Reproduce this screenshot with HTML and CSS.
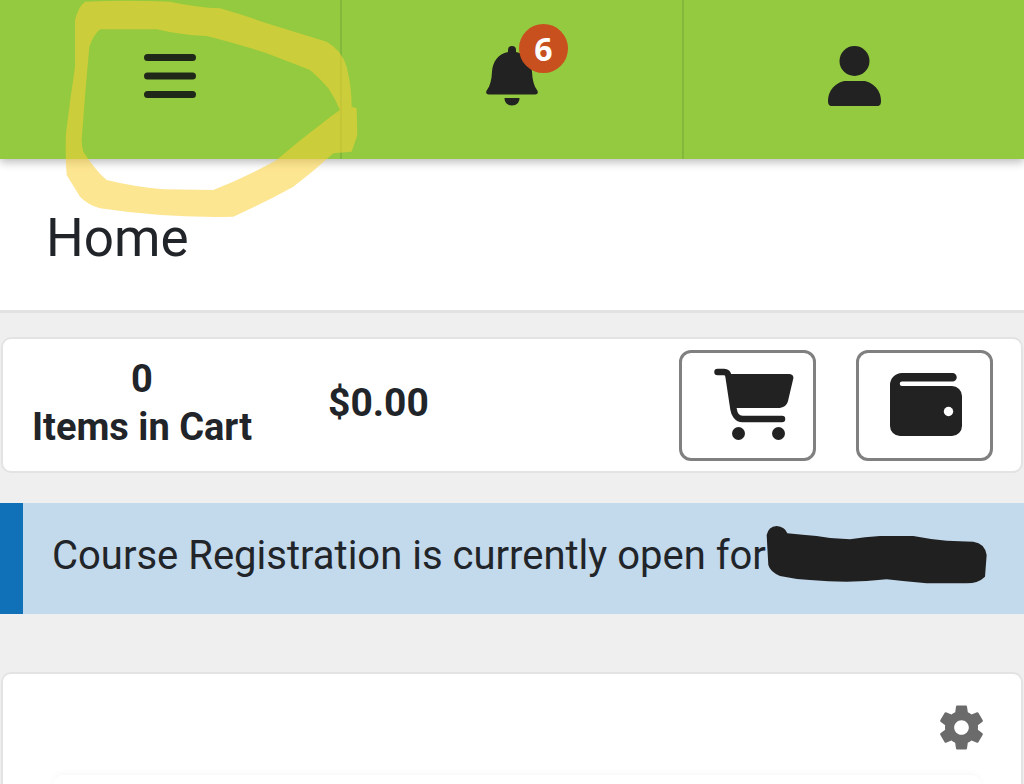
FILE: index.html
```html
<!DOCTYPE html>
<html lang="en">
<head>
    <meta charset="UTF-8">
    <meta name="viewport" content="width=device-width, initial-scale=1.0">
    <title>Home</title>
    <link rel="stylesheet" href="styles.css">
</head>
<body>
    <header class="topbar">
        <div class="topbar-item">
            <svg class="icon-menu" width="52" height="44" viewBox="0 0 52 44">
                <rect x="0" y="0" width="52" height="7" rx="3.5"/>
                <rect x="0" y="18.500" width="52" height="7" rx="3.5"/>
                <rect x="0" y="37" width="52" height="7" rx="3.5"/>
            </svg>
        </div>
        <div class="topbar-item">
            <div class="bell">
                <svg width="52" height="60" viewBox="0 0 52 60">
                    <path d="M26 0a4 4 0 0 1 4 4v2c10 2 15.500 10 16 20 .4 8 2 14 5 18 1.500 2 1 4.500-2 4.500H3c-3 0-3.500-2.500-2-4.500 3-4 4.600-10 5-18 .5-10 6-18 16-20V4a4 4 0 0 1 4-4z"/>
                    <path d="M18.500 52h15c0 4.500-3 7.500-7.500 7.500s-7.500-3-7.500-7.500z"/>
                </svg>
                <span class="badge">6</span>
            </div>
        </div>
        <div class="topbar-item">
            <svg width="53" height="60" viewBox="0 0 53 60">
                <circle cx="26.500" cy="15" r="15"/>
                <path d="M0 55c0-13 11-20 18-20h17c7 0 18 7 18 20 0 3-1 5-4 5H4c-3 0-4-2-4-5z"/>
            </svg>
        </div>
    </header>

    <section class="page-title">
        <h1>Home</h1>
    </section>

    <section class="card cart-card">
        <div class="cart-count">
            <div>0</div>
            <div>Items in Cart</div>
        </div>
        <div class="cart-total">$0.00</div>
        <div class="cart-buttons">
            <button class="icon-btn">
                <svg class="icon-cart" width="80" height="73" viewBox="0 0 80 73">
                    <path d="M3.500 4H10c2.500 0 4 1.500 4.500 4l5 33c.6 4.500 3.500 10 9 10H68" fill="none" stroke="#222" stroke-width="6.500" stroke-linecap="round"/>
                    <path d="M13 6h62c3 0 4.800 1.500 4.300 4.500L74 33c-1 4.500-5 7-10 7H19z"/>
                    <circle cx="24.500" cy="65.500" r="6.500"/>
                    <circle cx="64.500" cy="65.500" r="6.500"/>
                </svg>
            </button>
            <button class="icon-btn">
                <svg class="icon-wallet" width="72" height="63" viewBox="0 0 72 63">
                    <path d="M12 0h50.500a4.250 4.250 0 0 1 0 8.500H12a2.250 2.250 0 0 0 0 4.500h50a10 10 0 0 1 10 10v30a10 10 0 0 1-10 10H10a10 10 0 0 1-10-10V12A12 12 0 0 1 12 0z"/>
                    <circle cx="58.500" cy="38.500" r="4.700" fill="#fff"/>
                </svg>
            </button>
        </div>
    </section>

    <section class="notice">Course Registration is currently open for</section>

    <section class="card settings-card">
        <svg class="icon-gear" width="55" height="55" viewBox="0 0 24 24">
            <path d="M19.140 12.940c.04-.3.06-.61.06-.94 0-.32-.02-.64-.07-.94l2.030-1.580c.18-.14.23-.41.12-.61l-1.920-3.320c-.12-.22-.37-.29-.59-.22l-2.390.96c-.5-.38-1.030-.7-1.620-.94l-.36-2.540c-.04-.24-.24-.41-.48-.41h-3.840c-.24 0-.43.17-.47.41l-.36 2.540c-.59.24-1.130.57-1.620.94l-2.390-.96c-.22-.08-.47 0-.59.22L2.740 8.870c-.12.21-.08.47.12.61l2.030 1.580c-.05.3-.09.63-.09.94s.02.64.07.94l-2.030 1.580c-.18.14-.23.41-.12.61l1.920 3.320c.12.22.37.29.59.22l2.390-.96c.5.38 1.030.7 1.620.94l.36 2.540c.05.24.24.41.48.41h3.840c.24 0 .44-.17.47-.41l.36-2.540c.59-.24 1.130-.56 1.620-.94l2.390.96c.22.08.47 0 .59-.22l1.920-3.320c.12-.22.07-.47-.12-.61l-2.010-1.580zM12 15.200c-1.760 0-3.200-1.440-3.200-3.200s1.440-3.200 3.200-3.200 3.200 1.440 3.200 3.200-1.440 3.200-3.200 3.200z"/>
        </svg>
        <div class="settings-body"></div>
    </section>

    <!-- marks drawn on top of the screenshot -->
    <svg class="scribble" width="380" height="230" viewBox="0 0 1140 690">
        <path fill-rule="evenodd" d="M255 5Q380 0 510 5Q590 22 660 25Q730 45 800 70L980 125Q1025 150 1040 200Q1055 260 1055 320L1070 325L1072 405L1055 455L1000 460Q940 515 880 560Q790 610 700 650Q500 655 300 625Q265 615 240 590L200 525Q195 460 198 400Q210 300 225 200L225 60Q235 20 255 5ZM300 88Q280 105 268 140Q255 280 245 420Q245 440 250 455Q285 510 320 540Q400 560 490 568L640 570Q740 530 830 480Q900 420 960 375Q990 350 1020 330Q1005 295 985 265Q960 235 930 210Q865 185 800 160Q710 130 620 108Q540 105 470 88Z"/>
    </svg>
    <svg class="redaction" width="324" height="284" viewBox="0 0 972 852">
        <path d="M200 105Q205 80 230 78Q255 80 262 100Q310 105 350 108Q400 118 450 118Q495 110 540 108H640Q690 118 740 122L820 125Q855 130 860 165L855 230Q835 250 800 250H680Q620 245 560 238Q500 245 440 245Q385 245 330 240Q285 238 240 228Q210 215 205 195Z"/>
    </svg>
</body>
</html>
```

FILE: styles.css
```css
html, body {
    margin: 0;
    padding: 0;
    height: 784px;
    overflow: hidden;
}

body {
    position: relative;
    background-color: #efefef;
    font-family: Roboto, "Liberation Sans", sans-serif;
    color: #212529;
}

.topbar {
    position: relative;
    z-index: 1;
    display: flex;
    height: 159px;
    box-sizing: border-box;
    background-color: #93ca3f;
    box-shadow: 0 3px 9px rgba(0, 0, 0, 0.28);
}

.topbar-item {
    flex: 1;
    display: flex;
    align-items: center;
    justify-content: center;
    padding-bottom: 7px;
    border-right: 2px solid #82b93c;
}

.topbar-item:last-child {
    border-right: 0;
}

.topbar-item svg {
    fill: #222222;
}

.topbar-item .icon-menu {
    fill: #20281a;
}

.bell {
    position: relative;
    display: flex;
}

.badge {
    position: absolute;
    top: -22px;
    left: 33px;
    width: 49px;
    height: 49px;
    border-radius: 50%;
    background-color: #c8501f;
    color: #ffffff;
    font-family: "Open Sans", sans-serif;
    font-size: 32px;
    font-weight: 700;
    line-height: 49px;
    text-align: center;
}

.page-title {
    height: 154px;
    box-sizing: border-box;
    background-color: #ffffff;
    border-bottom: 3px solid #e2e2e2;
    padding: 49px 0 0 46px;
    margin-bottom: 24px;
}

.page-title h1 {
    margin: 0;
    font-size: 53px;
    font-weight: 400;
    line-height: 60px;
}

.card {
    box-sizing: border-box;
    margin: 0 1px;
    background-color: #ffffff;
    border: 2px solid #e3e3e3;
    border-radius: 10px;
}

.cart-card {
    display: flex;
    align-items: center;
    height: 136px;
    padding: 0 28px;
    font-weight: 700;
}

.cart-count {
    width: 222px;
    margin-bottom: 4px;
    font-size: 38px;
    text-align: center;
    line-height: 48px;
}

.cart-total {
    margin-left: 75px;
    margin-bottom: 4px;
    font-size: 39px;
}

.cart-buttons {
    display: flex;
    gap: 40px;
    margin-left: auto;
}

.icon-btn {
    display: flex;
    align-items: center;
    justify-content: center;
    width: 137px;
    height: 111px;
    padding: 0;
    background-color: #ffffff;
    border: 3px solid #808080;
    border-radius: 12px;
}

.icon-btn svg {
    fill: #222222;
}

.icon-cart {
    margin: 0 0 2px 12px;
}

.icon-wallet {
    margin: 0 0 2px 2px;
}

.notice {
    height: 111px;
    box-sizing: border-box;
    margin: 30px 0 58px;
    padding-left: 29px;
    background-color: #c3d9ec;
    border-left: 23px solid #1070b8;
    font-size: 40px;
    line-height: 105px;
    white-space: nowrap;
}

.settings-card {
    height: 112px;
    padding-top: 26px;
    border-bottom: 0;
    border-bottom-left-radius: 0;
    border-bottom-right-radius: 0;
    overflow: hidden;
}

.icon-gear {
    display: block;
    margin-left: auto;
    margin-right: 32px;
    fill: #6b6b6b;
}

.settings-body {
    height: 40px;
    margin: 20px 40px 0 50px;
    border-radius: 10px;
    box-shadow: 0 -2px 6px rgba(0, 0, 0, 0.03);
}

/* highlighter ring and the blacked out name */
.scribble {
    position: absolute;
    top: 0;
    left: 0;
    z-index: 2;
    fill: #fcd136;
    opacity: 0.54;
}

.redaction {
    position: absolute;
    top: 500px;
    left: 700px;
    fill: #202020;
}
```
